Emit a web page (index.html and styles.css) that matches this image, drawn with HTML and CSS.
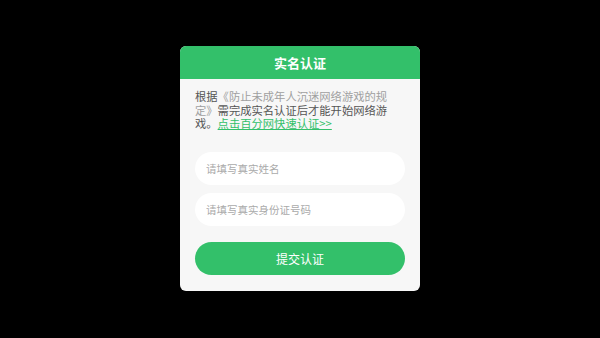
FILE: index.html
```html
<!DOCTYPE html>
<html lang="zh-CN">
<head>
    <meta charset="UTF-8">
    <meta name="viewport" content="width=device-width, initial-scale=1.0">
    <title>实名认证</title>
    <link rel="stylesheet" href="styles.css">
</head>
<body>
    <div class="dialog">
        <div class="dialog-header">实名认证</div>
        <div class="dialog-body">
            <p class="notice">根据<span class="law">《防止未成年人沉迷网络游戏的规定》</span>需完成实名认证后才能开始网络游戏。<a href="#" class="notice-link">点击百分网快速认证&gt;&gt;</a></p>
            <input type="text" class="field first" placeholder="请填写真实姓名">
            <input type="text" class="field" placeholder="请填写真实身份证号码">
            <button class="submit-btn">提交认证</button>
        </div>
    </div>
</body>
</html>
```

FILE: styles.css
```css
html, body {
    margin: 0;
    padding: 0;
    background-color: #000;
}
body {
    font-family: "Noto Sans CJK SC", "Noto Sans", sans-serif;
    display: flex;
    justify-content: center;
    padding-top: 46px;
}
.dialog {
    width: 240px;
    background-color: #f7f7f7;
    border-radius: 6px;
    overflow: hidden;
}
.dialog-header {
    height: 33px;
    line-height: 33px;
    background-color: #33c06a;
    color: #fff;
    font-size: 13px;
    font-weight: bold;
    text-align: center;
}
.dialog-body {
    padding: 11px 15px 16px;
    display: flex;
    flex-direction: column;
}
.notice {
    margin: 0;
    max-width: 196px;
    font-size: 11.3px;
    line-height: 13.5px;
    color: #555;
}
.law {
    color: #a0a0a0;
}
.notice-link {
    color: #33c06a;
    text-decoration: underline;
}
.field {
    box-sizing: border-box;
    height: 33px;
    margin-top: 8px;
    padding: 0 11px;
    border: none;
    border-radius: 17px;
    background-color: #fff;
    font-family: inherit;
    font-size: 10.5px;
    color: #333;
    outline: none;
}
.field.first {
    margin-top: 21px;
}
.field::placeholder {
    color: #aaa;
}
.submit-btn {
    height: 33px;
    margin-top: 16px;
    border: none;
    border-radius: 17px;
    background-color: #33c06a;
    color: #fff;
    font-family: inherit;
    font-size: 12px;
    cursor: pointer;
}
```
